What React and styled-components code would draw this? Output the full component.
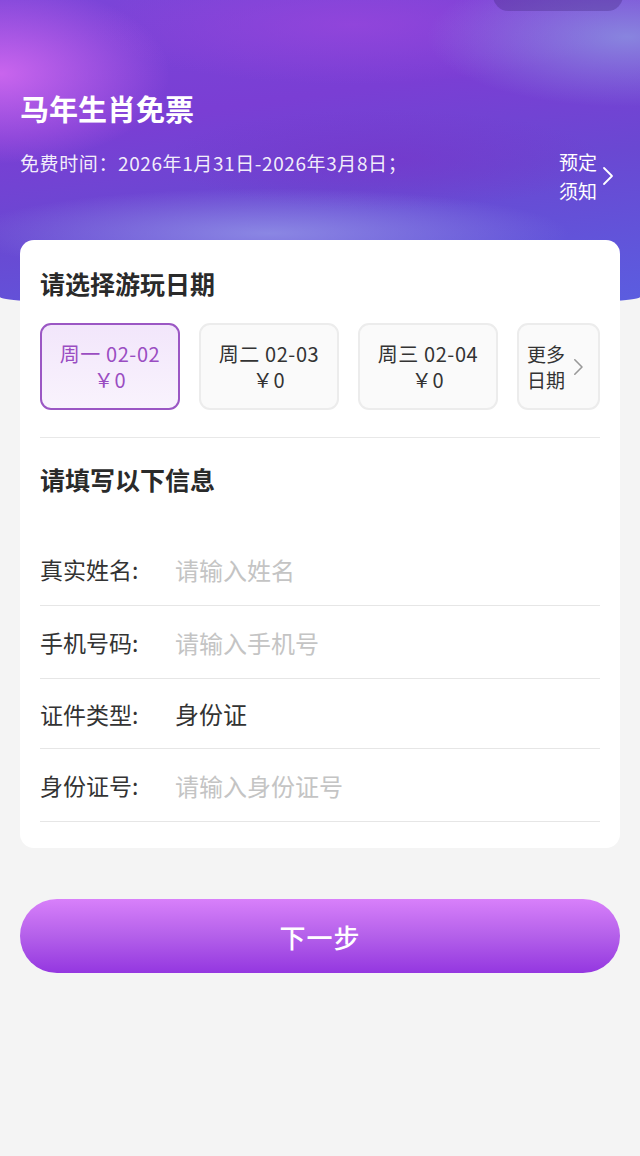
import React from 'react';
import styled, { createGlobalStyle } from 'styled-components';

const GlobalStyle = createGlobalStyle`
  body {
    margin: 0;
    background: #f4f4f4;
    font-family: "Noto Sans CJK SC", "Noto Sans", sans-serif;
  }
`;

const Page = styled.div`
  position: relative;
  width: 640px;
  min-height: 1156px;
  background: #f4f4f4;
  overflow: hidden;
`;

const Header = styled.header`
  height: 307px;
  box-sizing: border-box;
  padding: 88px 26px 0 20px;
  border-radius: 0 0 50% 50% / 0 0 10px 10px;
  background:
    radial-gradient(ellipse 170px 90px at 0% 24%, rgba(210, 105, 240, 0.9), rgba(210, 105, 240, 0) 100%),
    radial-gradient(ellipse 300px 45px at 42% 76%, rgba(145, 145, 230, 0.85), rgba(145, 145, 230, 0) 100%),
    radial-gradient(ellipse 200px 70px at 98% 12%, rgba(140, 150, 225, 0.8), rgba(140, 150, 225, 0) 100%),
    radial-gradient(ellipse 260px 60px at 55% 8%, rgba(150, 70, 220, 0.8), rgba(150, 70, 220, 0) 100%),
    radial-gradient(ellipse 220px 50px at 60% 52%, rgba(120, 50, 200, 0.55), rgba(120, 50, 200, 0) 100%),
    linear-gradient(172deg, #7b45d8 0%, #7a3ed4 35%, #6a48d2 60%, #5a5ee0 100%);
`;

const Capsule = styled.div`
  position: absolute;
  top: -20px;
  left: 493px;
  width: 130px;
  height: 31px;
  border-radius: 16px;
  background: rgba(70, 40, 130, 0.35);
`;

const Title = styled.h1`
  margin: 0;
  font-size: 29px;
  font-weight: 700;
  line-height: 40px;
  color: #fff;
`;

const InfoRow = styled.div`
  display: flex;
  justify-content: space-between;
  align-items: flex-start;
  margin-top: 24px;
`;

const Period = styled.div`
  font-size: 19px;
  line-height: 22px;
  letter-spacing: 0.6px;
  color: rgba(255, 255, 255, 0.92);
`;

const Notice = styled.div`
  display: flex;
  align-items: center;
  gap: 5px;
  margin-top: -5px;
  color: #fff;
  font-size: 19px;
  line-height: 29px;
`;

const Card = styled.section`
  position: relative;
  margin: -67px 20px 0;
  padding: 22px 20px 26px;
  background: #fff;
  border-radius: 14px;
`;

const SectionTitle = styled.h2`
  margin: 0;
  font-size: 25px;
  font-weight: 700;
  line-height: 42px;
  color: #2a2a2a;
`;

const Dates = styled.div`
  display: flex;
  gap: 19px;
  margin-top: 19px;
  padding-bottom: 27px;
  border-bottom: 1px solid #e8e8e8;
`;

const DateChip = styled.div`
  flex: ${(p) => (p.$more ? '0 0 83px' : '0 0 140px')};
  height: 87px;
  box-sizing: border-box;
  border-radius: 11px;
  border: ${(p) => (p.$active ? '2px solid #9b57c4' : '2px solid #ececec')};
  background: ${(p) =>
    p.$active ? 'linear-gradient(180deg, #f2e6fb, #f9f3fd)' : '#fafafa'};
  color: ${(p) => (p.$active ? '#9a4dc2' : '#333')};
  display: flex;
  flex-direction: column;
  align-items: center;
  justify-content: center;
  font-size: 20px;
  letter-spacing: 0.6px;
  line-height: 26px;
`;

const MoreChip = styled(DateChip)`
  flex-direction: row;
  justify-content: flex-start;
  padding-left: 8px;
  gap: 6px;
`;

const MoreText = styled.div`
  width: 40px;
  font-size: 19px;
  line-height: 26px;
  letter-spacing: 0;
  color: #333;
`;

const FormTitle = styled(SectionTitle)`
  margin-top: 20px;
  margin-bottom: 33px;
`;

const Row = styled.div`
  display: flex;
  align-items: center;
  height: ${(p) => (p.$compact ? '70px' : '73px')};
  box-sizing: border-box;
  border-bottom: 1px solid #e6e6e6;
`;

const Label = styled.div`
  width: 135px;
  font-size: 23px;
  color: #333;
`;

const Value = styled.div`
  font-size: 24px;
  color: ${(p) => (p.$placeholder ? '#c4c4c4' : '#333')};
`;

const Footer = styled.div`
  padding: 51px 20px 0;
`;

const NextButton = styled.button`
  display: block;
  width: 100%;
  height: 74px;
  border: none;
  border-radius: 37px;
  background: linear-gradient(180deg, #d880fa 0%, #b460ea 50%, #9437e0 100%);
  color: #fff;
  font-family: inherit;
  font-size: 26px;
  font-weight: 500;
  letter-spacing: 1px;
`;

const Chevron = ({ color = '#fff', size = 20 }) => (
  <svg width={size * 0.6} height={size} viewBox="0 0 12 20" fill="none">
    <path d="M2 2l8 8-8 8" stroke={color} strokeWidth="1.8" strokeLinecap="round" strokeLinejoin="round" />
  </svg>
);

const dates = [
  { day: '周一', date: '02-02', active: true },
  { day: '周二', date: '02-03' },
  { day: '周三', date: '02-04' },
];

const fields = [
  { label: '真实姓名:', value: '请输入姓名', placeholder: true },
  { label: '手机号码:', value: '请输入手机号', placeholder: true },
  { label: '证件类型:', value: '身份证', compact: true },
  { label: '身份证号:', value: '请输入身份证号', placeholder: true },
];

export default function App() {
  return (
    <Page>
      <GlobalStyle />
      <Header>
        <Title>马年生肖免票</Title>
        <InfoRow>
          <Period>免费时间：2026年1月31日-2026年3月8日；</Period>
          <Notice>
            <div>
              预定
              <br />
              须知
            </div>
            <Chevron />
          </Notice>
        </InfoRow>
      </Header>
      <Capsule />

      <Card>
        <SectionTitle>请选择游玩日期</SectionTitle>
        <Dates>
          {dates.map((d) => (
            <DateChip key={d.date} $active={d.active}>
              <div>
                {d.day} {d.date}
              </div>
              <div>￥0</div>
            </DateChip>
          ))}
          <MoreChip $more>
            <MoreText>更多日期</MoreText>
            <Chevron color="#999" size={18} />
          </MoreChip>
        </Dates>

        <FormTitle>请填写以下信息</FormTitle>
        {fields.map((f) => (
          <Row key={f.label} $compact={f.compact}>
            <Label>{f.label}</Label>
            <Value $placeholder={f.placeholder}>{f.value}</Value>
          </Row>
        ))}
      </Card>

      <Footer>
        <NextButton>下一步</NextButton>
      </Footer>
    </Page>
  );
}
